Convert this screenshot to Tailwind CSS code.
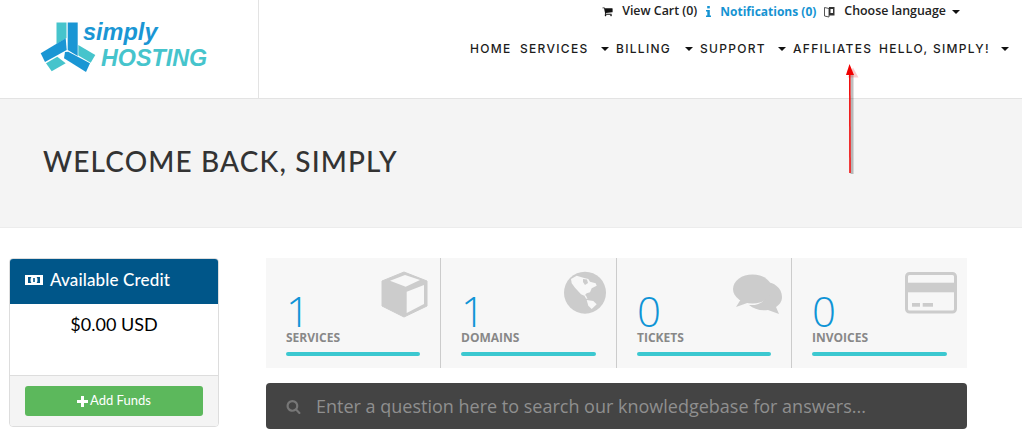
<!DOCTYPE html>
<html><head><meta charset="utf-8"><script src="https://cdn.jsdelivr.net/npm/@tailwindcss/browser@4"></script></head>
<body class="bg-white overflow-hidden">
<div class="relative w-[1022px] h-[444px] overflow-hidden font-['Open_Sans',sans-serif]">
<header class="flex h-[99px] border-b border-[#e3e3e3]">
  <div class="relative w-[259px] shrink-0 border-r border-[#e3e3e3]">
    <svg class="absolute left-0 top-0" width="100" height="80" viewBox="0 0 100 80">
      <polygon points="56.5,22.5 66.5,22.5 66.5,38 56.5,44" fill="#46c4cc"/>
      <polygon points="67.7,22.5 77.7,22.5 77.7,56 67.7,50" fill="#1a96d4"/>
      <polygon points="40.7,53.3 65.7,38.3 66.7,50 45,62" fill="#1a96d4"/>
      <polygon points="68.3,51.7 90,63.3 86,72 64,58.3 65,52" fill="#1a96d4"/>
      <polygon points="78.3,45 95.3,55 90.7,62.7 78.3,55.5" fill="#46c4cc"/>
      <polygon points="46,63.3 57.3,56.7 65.7,63.3 51.7,71.3" fill="#46c4cc"/>
    </svg>
    <span class="absolute left-[83px] top-[18px] font-['Liberation_Sans',sans-serif] italic font-bold text-[23.5px] leading-[28px] text-[#1a96d4]">simply</span>
    <span class="absolute left-[101px] top-[43px] font-['Liberation_Sans',sans-serif] italic font-bold text-[23.3px] leading-[30px] text-[#46c4cc]">HOSTING</span>
  </div>
  <div class="flex-1 flex flex-col">
    <div class="flex justify-end items-center h-[22px] pt-[1px] pr-[62px] text-[12.4px] font-semibold text-[#222] whitespace-nowrap">
      <svg class="mr-[9px]" width="11" height="11" viewBox="0 0 1792 1792"><path fill="#111" d="M704 1536q0 52-38 90t-90 38-90-38-38-90 38-90 90-38 90 38 38 90zm896 0q0 52-38 90t-90 38-90-38-38-90 38-90 90-38 90 38 38 90zm128-1088v512q0 24-16.5 42.5t-40.5 21.5l-1044 122q13 60 13 70 0 16-24 64h920q26 0 45 19t19 45-19 45-45 19h-1024q-26 0-45-19t-19-45q0-11 8-31.5t16-36 21.5-40 15.5-29.5l-177-823h-204q-26 0-45-19t-19-45 19-45 45-19h256q16 0 28.5 6.5t19.5 15.5 13 24.5 8 26 5.500 29.5 4.5 26h1201q26 0 45 19t19 45z"/></svg>
      <span>View Cart (0)</span>
      <svg class="ml-[9px] mr-[9px]" width="5" height="11" viewBox="0 0 5 11"><rect x="1.200" y="0" width="2.600" height="2.400" fill="#1593d2"/><path d="M0 4h3.800v5.500H5V11H0V9.500h1.300V5.500H0z" fill="#1593d2"/></svg>
      <span class="text-[#1593d2] font-bold text-[12px]">Notifications (0)</span>
      <svg class="ml-[8px] mr-[9px]" width="11" height="12" viewBox="0 0 11 12"><path d="M0.5 1.5 L5 2.5 L5 11 L0.5 10 Z" fill="#fff" stroke="#555" stroke-width="1"/><path d="M5 1 L10.5 1 L10.5 9.5 L5 9.5 Z" fill="#333"/><rect x="6.5" y="3" width="2.5" height="4" fill="#fff"/></svg>
      <span>Choose language</span>
      <span class="ml-[6px] w-0 h-0 border-x-[4px] border-t-[4px] border-x-transparent border-t-[#111]"></span>
    </div>
    <nav class="flex justify-end items-center mt-[17px] h-[20px] pr-[13px] font-['Inter',sans-serif] font-medium text-[12px] tracking-[1.3px] text-[#1c1c1c] whitespace-nowrap">
      <span class="w-[50px]">HOME</span>
      <span class="w-[81px]">SERVICES</span>
      <span class="w-0 h-0 border-x-[4px] border-t-[4px] border-x-transparent border-t-[#111] mr-[7px]"></span>
      <span class="w-[69px]">BILLING</span>
      <span class="w-0 h-0 border-x-[4px] border-t-[4px] border-x-transparent border-t-[#111] mr-[7px]"></span>
      <span class="w-[78px]">SUPPORT</span>
      <span class="w-0 h-0 border-x-[4px] border-t-[4px] border-x-transparent border-t-[#111] mr-[7px]"></span>
      <span class="w-[86px]">AFFILIATES</span>
      <span class="w-[122px]">HELLO, SIMPLY!</span>
      <span class="w-0 h-0 border-x-[4px] border-t-[4px] border-x-transparent border-t-[#111]"></span>
    </nav>
  </div>
</header>
<section class="h-[129px] bg-[#f4f4f4] border-b border-[#ececec] flex items-center pl-[43px] pb-[4px]">
  <h1 class="font-['Lato',sans-serif] font-medium text-[28px] tracking-[1.15px] text-[#333]">WELCOME BACK, SIMPLY</h1>
</section>
<main class="flex pt-[30px] pl-[9px] gap-[47px]">
  <aside class="w-[210px] h-[169px] rounded border border-[#ddd] overflow-hidden flex flex-col font-['Lato',sans-serif]">
    <div class="h-[45px] bg-[#005689] flex items-center pl-[15px] pb-[3px] text-white text-[17px] tracking-[0.15px] font-medium">
      <svg class="mr-[7px]" width="18" height="12" viewBox="0 0 18 12"><path fill-rule="evenodd" d="M0 1h18v10H0z M3 3v6h12V3z" fill="#fff"/><ellipse cx="9" cy="6" rx="3.5" ry="4" fill="#fff"/><rect x="8.2" y="4" width="1.6" height="4" fill="#005689"/></svg>
      Available Credit
    </div>
    <div class="flex-1 bg-white text-center text-[18px] leading-[24px] pt-[8px] text-black">$0.00 USD</div>
    <div class="h-[51px] bg-[#f4f4f4] border-t border-[#ddd] px-[15px] pt-[10px]">
      <button class="w-full h-[30px] rounded-[3px] bg-[#5cb85c] text-white text-[13px] flex items-center justify-center gap-[2px]">
        <svg width="11" height="11" viewBox="0 0 11 11"><path d="M4 0h3v4h4v3H7v4H4V7H0V4h4z" fill="#fff"/></svg>Add Funds
      </button>
    </div>
  </aside>
  <div class="w-[701px]">
    <div class="grid grid-cols-[175px_176px_175px_175px] h-[110px] bg-[#f7f7f7]">
      <div class="relative border-r border-[#ccc] pl-[20px] pr-[20px]">
        <div class="text-[42px] font-light leading-[40px] pt-[33px] h-[73px] text-[#0f94d6]">1</div>
        <div class="text-[12px] font-bold leading-[14px] text-[#888]">SERVICES</div>
        <div class="h-[4px] mt-[7px] rounded bg-[#3cc8d0]"></div>
        <svg class="absolute left-[115px] top-[13px]" width="48" height="48" viewBox="0 0 48 48"><polygon points="23,1 46,10 46,35 23,46 1,35 1,10" fill="#ccc" stroke="#ccc" stroke-width="1" stroke-linejoin="round"/><polygon points="9,9.700 24,4 39,9 24.700,15.700" fill="#f7f7f7"/><polygon points="25.700,20.700 43,14 43,33 25.700,42" fill="#f7f7f7"/></svg>
      </div>
      <div class="relative border-r border-[#ccc] pl-[20px] pr-[20px]">
        <div class="text-[42px] font-light leading-[40px] pt-[33px] h-[73px] text-[#0f94d6]">1</div>
        <div class="text-[12px] font-bold leading-[14px] text-[#888]">DOMAINS</div>
        <div class="h-[4px] mt-[7px] rounded bg-[#3cc8d0]"></div>
        <svg class="absolute left-[122px] top-[13px]" width="44" height="44" viewBox="0 0 44 44"><circle cx="22" cy="21.700" r="21" fill="#ccc"/><polygon points="8,8 13.700,4.700 20.300,6.700 25.300,8 27,10.700 32.700,12.300 33.700,14.700 28.700,17.300 27,21.300 23.700,22.300 21.300,24.700 18,23.300 12,16.700 8.700,12.300" fill="#f7f7f7"/><polygon points="23.700,29 30.300,30 33.700,33.300 28.700,38 25.300,34.700" fill="#f7f7f7"/><polygon points="21,24 23,24.500 24.500,28 23,27.500" fill="#f7f7f7"/><polygon points="20,8 24,8.500 25,12 22,14 20,11" fill="#ccc"/></svg>
      </div>
      <div class="relative border-r border-[#ccc] pl-[20px] pr-[20px]">
        <div class="text-[42px] font-light leading-[40px] pt-[33px] h-[73px] text-[#0f94d6]">0</div>
        <div class="text-[12px] font-bold leading-[14px] text-[#888]">TICKETS</div>
        <div class="h-[4px] mt-[7px] rounded bg-[#3cc8d0]"></div>
        <svg class="absolute left-[115px] top-[13px]" width="52" height="46" viewBox="0 0 52 46"><path d="M33 11 C42 11 50 17 50 26 C50 31 47 34 44 36 L47 43 L36 39 C28 40 22 38 17 34 C28 35 38 29 36 14 Z" fill="#ccc"/><ellipse cx="20.5" cy="18" rx="19.5" ry="14.5" fill="#ccc"/><path d="M9 28 L4 36 L18 31 Z" fill="#ccc"/></svg>
      </div>
      <div class="relative pl-[20px] pr-[20px]">
        <div class="text-[42px] font-light leading-[40px] pt-[33px] h-[73px] text-[#0f94d6]">0</div>
        <div class="text-[12px] font-bold leading-[14px] text-[#888]">INVOICES</div>
        <div class="h-[4px] mt-[7px] rounded bg-[#3cc8d0]"></div>
        <svg class="absolute left-[113px] top-[14px]" width="52" height="42" viewBox="0 0 52 42"><rect x="1.5" y="1.5" width="49" height="38.5" rx="3" fill="#f7f7f7" stroke="#ccc" stroke-width="3"/><rect x="2" y="10.7" width="48" height="9.6" fill="#ccc"/><rect x="7" y="31" width="8" height="3.7" fill="#ccc"/><rect x="17.7" y="31" width="10.3" height="3.7" fill="#ccc"/></svg>
      </div>
    </div>
    <div class="mt-[15px] h-[46px] bg-[#444] rounded flex items-center pl-[20px] text-[18px] text-[#8f8f8f]">
      <svg class="mr-[15px]" width="15" height="15" viewBox="0 0 1792 1792"><path fill="#777" d="M1216 832q0-185-131.500-316.500t-316.500-131.500-316.500 131.500-131.500 316.500 131.500 316.500 316.500 131.500 316.500-131.500 131.500-316.500zm512 832q0 52-38 90t-90 38q-54 0-90-38l-343-342q-179 124-399 124-143 0-273.500-55.500t-225-150-150-225-55.500-273.500 55.500-273.500 150-225 225-150 273.500-55.500 273.500 55.500 225 150 150 225 55.500 273.500q0 220-124 399l343 343q37 37 37 90z"/></svg>
      Enter a question here to search our knowledgebase for answers...
    </div>
  </div>
</main>
<svg class="absolute left-[840px] top-[60px]" width="24" height="120" viewBox="0 0 24 120">
  <path d="M12 14 L12 114" stroke="#000" stroke-opacity=".25" stroke-width="3"/>
  <polygon points="11.500,6 6,16 17,16" fill="#e00" transform="translate(1.500,1.500)" opacity=".2"/>
  <path d="M9.800 12 L10 113" stroke="#f00000" stroke-width="1.500"/>
  <polygon points="9.500,4 6,15 14,15" fill="#f00000"/>
</svg>
</div>
</body></html>
